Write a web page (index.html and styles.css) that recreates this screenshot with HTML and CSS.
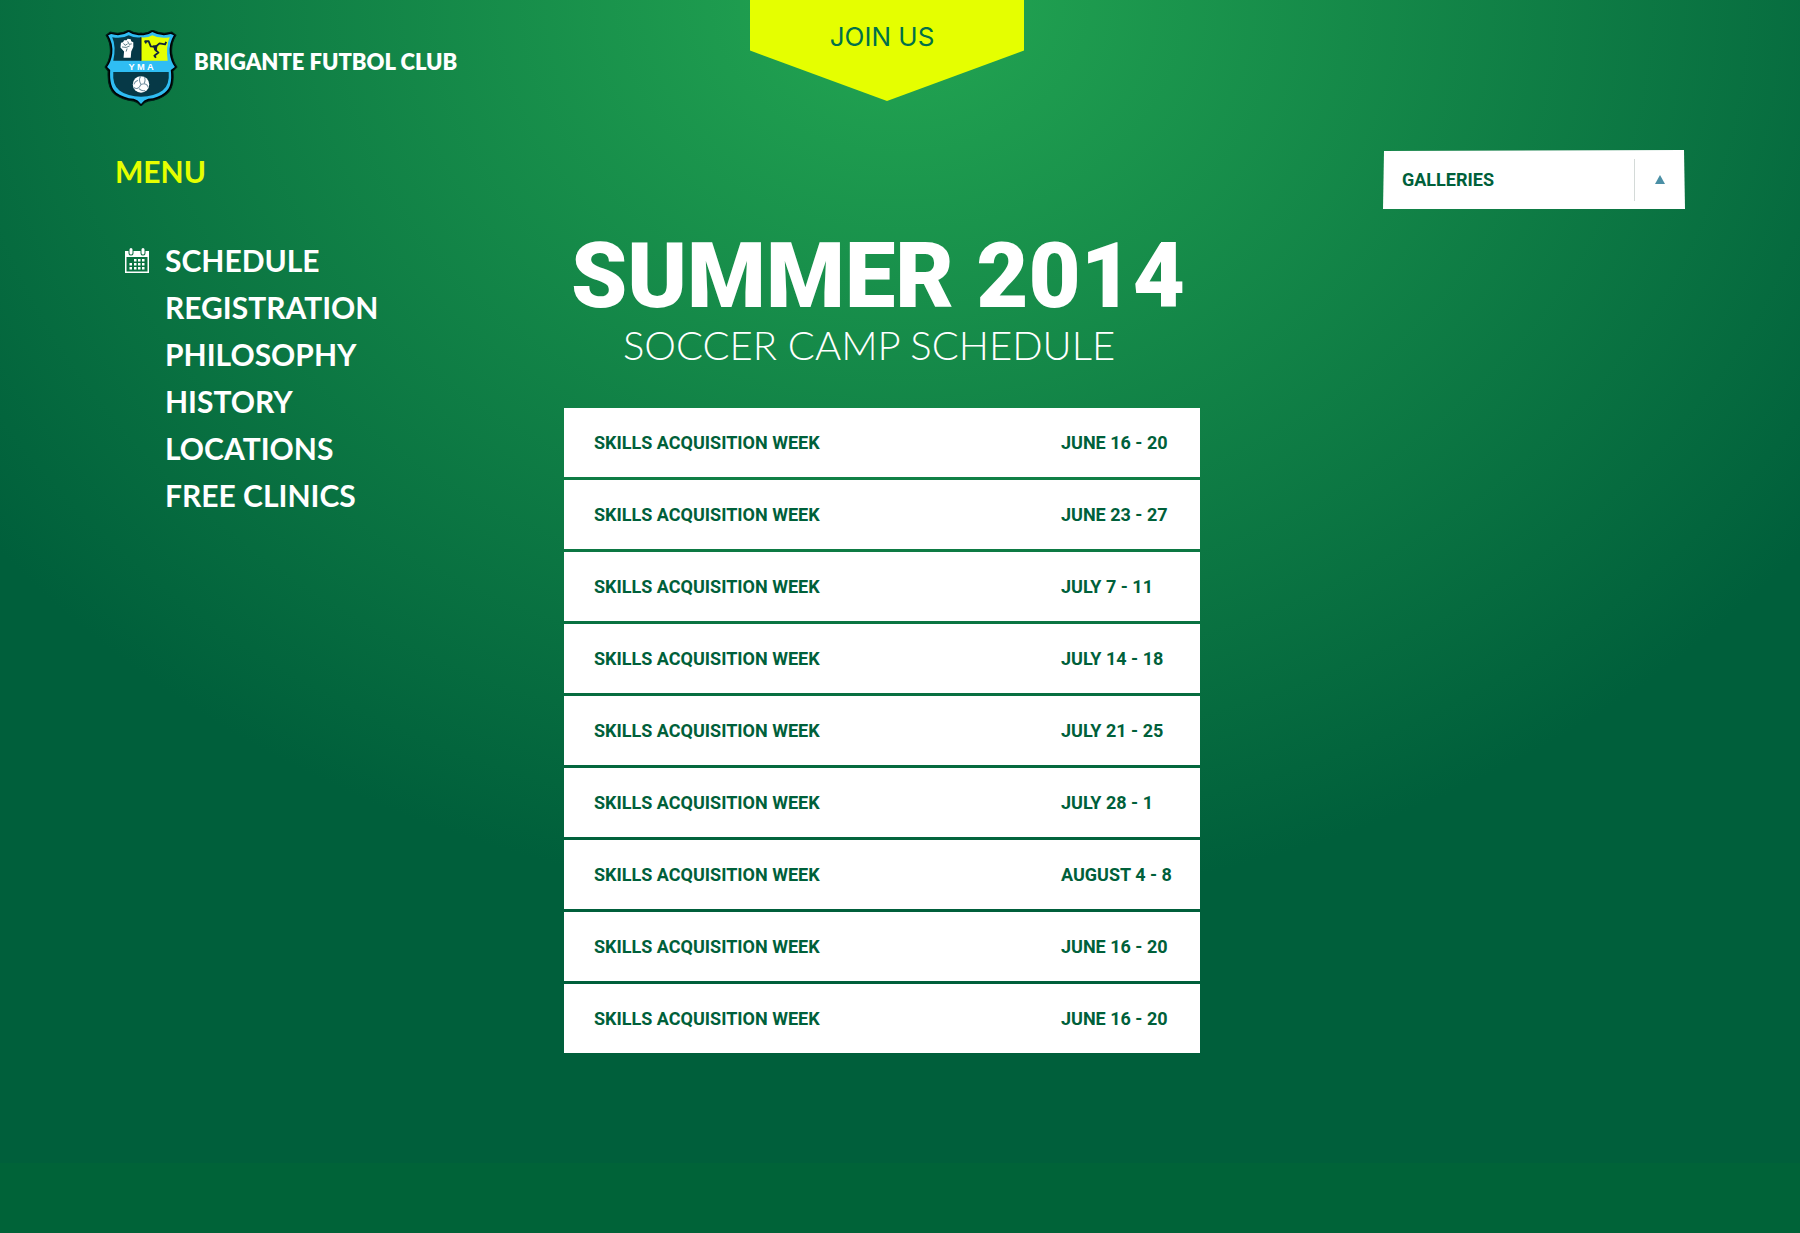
FILE: index.html
```html
<!DOCTYPE html>
<html lang="en">
<head>
<meta charset="utf-8">
<meta name="viewport" content="width=device-width, initial-scale=1">
<title>Brigante Futbol Club</title>
<link rel="stylesheet" href="styles.css">
</head>
<body>
<div class="page">
  <header class="header">
    <a class="brand" href="#">
      <svg class="crest" viewBox="0 1 72 74" aria-hidden="true">
        <path d="M2 6 L6 3 Q16 6 24 1 Q30 5 36 4 Q42 5 47 1 Q56 6 66 3 L70 6 Q65 14 66 24 Q67 32 71 37 L67 41 Q69 58 60 64 Q54 69 44 70 Q39 71 36 75 Q33 71 28 70 Q18 69 11 64 Q3 58 4 41 L1 37 Q5 32 6 24 Q7 14 2 6Z" fill="#000" stroke="#001d18" stroke-width="1"/>
        <path d="M4 6 L7 5 Q16 8 24 3 Q30 7 36 6 Q42 7 47 3 Q56 8 65 5 L68 6 Q63 14 64 24 Q65 32 69 37 L65 40 Q67 57 59 62 Q53 67 43 68 Q39 69 36 73 Q33 69 29 68 Q19 67 12 62 Q5 57 6 40 L3 37 Q7 32 8 24 Q9 14 4 6Z" fill="#2fbdf3"/>
        <path d="M8 8 Q17 10 24 6 Q30 9 36 8 V31 H9 Q12 17 8 8Z" fill="#063947"/>
        <path d="M36 8 Q42 9 47 6 Q55 10 64 8 Q60 17 62 31 H36Z" fill="#e5ff00"/>
        <path d="M36 8V31" stroke="#08172b" stroke-width="1"/>
        <path d="M9 42 H63 Q64 55 57 60 Q49 66 36 66 Q23 66 15 60 Q8 55 9 42Z" fill="#063947"/>
        <path d="M19 28 L19.500 22 L16 18 L16.500 13.500 L18.500 13 L19.500 11 L22 11 L23 9.500 L26 10 L26.500 12 L28.500 13 V17.500 L26.500 22 L26 28Z" fill="#fff"/>
        <path d="M19 14 L20.500 16 L23 14.500 M23 12 L24.500 15 L27 14.500 M17.500 17.500 L21.500 18 L25 16.500 M22.500 19 L21.500 22" fill="none" stroke="#38616d" stroke-width="0.800"/>
        <path d="M41 14 L40 12 L43.500 12 L45.500 17 L50 17.500 L54 14 L59.500 15 L60.500 12.500 M50 17 L50 20.500 L53 23 L49 26 L50.500 28" fill="none" stroke="#10243c" stroke-width="1.800" stroke-linejoin="round"/>
        <path d="M47.500 16 L52 15.500 L51.500 20.500 L49 20.500Z" fill="#10243c"/>
        <text x="36" y="40" text-anchor="middle" class="crest-text">Y M A</text>
        <circle cx="36" cy="54" r="8" fill="#fff"/>
        <path d="M36 54 Q33 49 36 46 M36 54 Q42 52 43 57 M36 54 Q33 60 29 57 M33 50 Q30 51 29 54 M39 53 Q41 49 39 47 M34 58 Q37 61 40 60" fill="none" stroke="#7390a0" stroke-width="1"/>
      </svg>
      <span class="brand-name">BRIGANTE FUTBOL CLUB</span>
    </a>
    <a class="join" href="#">JOIN US</a>
  </header>

  <div class="layout">
    <nav class="menu" aria-labelledby="menu-title">
      <h2 class="menu-title" id="menu-title">MENU</h2>
      <ul class="menu-list">
        <li><svg class="calendar" viewBox="0 0 24 25" aria-hidden="true">
          <path fill="#fff" fill-rule="evenodd" d="M0 3H24V25H0ZM1.500 9V23.500H22.500V9Z"/>
          <path d="M6 2V5M18 2V5" stroke="#0a6c40" stroke-width="5" stroke-linecap="round"/>
          <path d="M6 1.500V5M18 1.500V5" stroke="#fff" stroke-width="3" stroke-linecap="round"/>
          <path fill="#fff" d="M9 11h2.500v2.500H9zM13 11h2.500v2.500H13zM17 11h2.500v2.500H17zM4.500 15H7v2.500H4.500zM9 15h2.500v2.500H9zM13 15h2.500v2.500H13zM17 15h2.500v2.500H17zM4.500 19H7v2.500H4.500zM9 19h2.500v2.500H9zM13 19h2.500v2.500H13zM17 19h2.500v2.500H17z"/>
        </svg><a href="#" aria-current="page">SCHEDULE</a></li>
        <li><a href="#">REGISTRATION</a></li>
        <li><a href="#">PHILOSOPHY</a></li>
        <li><a href="#">HISTORY</a></li>
        <li><a href="#">LOCATIONS</a></li>
        <li><a href="#">FREE CLINICS</a></li>
      </ul>
    </nav>

    <main class="schedule">
      <h1 class="title">SUMMER 2014</h1>
      <p class="subtitle">SOCCER CAMP SCHEDULE</p>
      <table class="weeks">
        <tbody>
          <tr><td>SKILLS ACQUISITION WEEK</td><td class="date">JUNE 16 - 20</td></tr>
          <tr><td>SKILLS ACQUISITION WEEK</td><td class="date">JUNE 23 - 27</td></tr>
          <tr><td>SKILLS ACQUISITION WEEK</td><td class="date">JULY 7 - 11</td></tr>
          <tr><td>SKILLS ACQUISITION WEEK</td><td class="date">JULY 14 - 18</td></tr>
          <tr><td>SKILLS ACQUISITION WEEK</td><td class="date">JULY 21 - 25</td></tr>
          <tr><td>SKILLS ACQUISITION WEEK</td><td class="date">JULY 28 - 1</td></tr>
          <tr><td>SKILLS ACQUISITION WEEK</td><td class="date">AUGUST 4 - 8</td></tr>
          <tr><td>SKILLS ACQUISITION WEEK</td><td class="date">JUNE 16 - 20</td></tr>
          <tr><td>SKILLS ACQUISITION WEEK</td><td class="date">JUNE 16 - 20</td></tr>
        </tbody>
      </table>
    </main>

    <aside class="side">
      <button class="galleries" type="button" aria-expanded="false">
        <span class="galleries-label">GALLERIES</span>
        <span class="galleries-arrow"><svg viewBox="0 0 10 9" aria-hidden="true"><path d="M5 0L10 9H0Z" fill="#4a8fa5"/></svg></span>
      </button>
    </aside>
  </div>
</div>
<footer class="footer"></footer>
</body>
</html>
```
FILE: styles.css
```css
* {
  box-sizing: border-box;
}

body {
  margin: 0;
  min-height: 100vh;
  display: flex;
  flex-direction: column;
  background: #006338;
  color: #fff;
  font-family: Lato, "Open Sans", sans-serif;
}

a {
  color: inherit;
  text-decoration: none;
}

.page {
  padding-bottom: 107px;
  background: radial-gradient(ellipse 63% 78% at 50% 0, #23a652 0%, #005f3b 100%);
}

.footer {
  flex: 1;
  min-height: 70px;
}

/* Header */
.header {
  display: grid;
  grid-template-columns: 1fr 274px 1fr;
  align-items: start;
  height: 150px;
  padding-left: 104px;
  padding-right: 130px;
}

.brand {
  display: flex;
  align-items: center;
  gap: 16px;
  margin-top: 30px;
}

.crest {
  width: 74px;
  height: 76px;
}

.crest-text {
  font: 700 9px "Liberation Sans", sans-serif;
  fill: #fff;
}

.brand-name {
  font-size: 22px;
  line-height: 24px;
  font-weight: 800;
  margin-bottom: 12px;
  white-space: nowrap;
}

.join {
  height: 101px;
  padding: 21px 10px 0 0;
  background: #e5ff00;
  clip-path: polygon(0 0, 100% 0, 100% 50%, 50% 100%, 0 50%);
  color: #00704a;
  font: 400 26px/32px Inter, sans-serif;
  text-align: center;
}

/* Three columns */
.layout {
  display: grid;
  grid-template-columns: 449fr 636px 485fr;
  padding: 0 115px;
}

.menu-title {
  margin: 3px 0 0;
  color: #e5ff00;
  font-size: 30px;
  line-height: 36px;
  font-weight: 700;
}

.menu-list {
  margin: 48px 0 0;
  padding: 0;
  list-style: none;
  font-size: 30px;
  line-height: 47px;
  font-weight: 700;
}

.menu-list li {
  display: grid;
  grid-template-columns: 24px 1fr;
  column-gap: 16px;
  align-items: center;
  padding-left: 10px;
}

.menu-list a {
  grid-column: 2;
}

.calendar {
  width: 24px;
  height: 25px;
}

/* Schedule */
.schedule {
  padding-top: 80px;
}

.title {
  margin: 0;
  padding-right: 8px;
  font: 900 90px/94px Roboto, sans-serif;
  text-align: center;
  white-space: nowrap;
}

.subtitle {
  margin: 0 0 42px;
  padding-right: 26px;
  font-size: 40px;
  line-height: 42px;
  font-weight: 300;
  text-align: center;
}

.weeks {
  width: 100%;
  border-collapse: separate;
  border-spacing: 0;
  color: #00603a;
  font: 700 18px/24px Roboto, sans-serif;
}

.weeks td {
  height: 72px;
  padding: 0 0 0 30px;
  background: #fff;
  background-clip: padding-box;
  border-bottom: 3px solid transparent;
}

.weeks .date {
  width: 169px;
}

/* Galleries */
.side {
  display: flex;
  justify-content: flex-end;
  align-items: flex-start;
}

.galleries {
  display: flex;
  align-items: center;
  width: 302px;
  height: 59px;
  padding: 0 0 0 19px;
  border: 0;
  background: #fff;
  clip-path: polygon(1px 1px, 301px 0, 100% 100%, 0 100%);
  color: #00603a;
  font: 700 18px/24px Roboto, sans-serif;
}

.galleries-label {
  flex: 1;
  text-align: left;
}

.galleries-arrow {
  display: flex;
  align-items: center;
  justify-content: center;
  width: 51px;
  height: 42px;
  border-left: 1px solid #d4dad8;
}

.galleries-arrow svg {
  width: 10px;
  height: 9px;
}
```
